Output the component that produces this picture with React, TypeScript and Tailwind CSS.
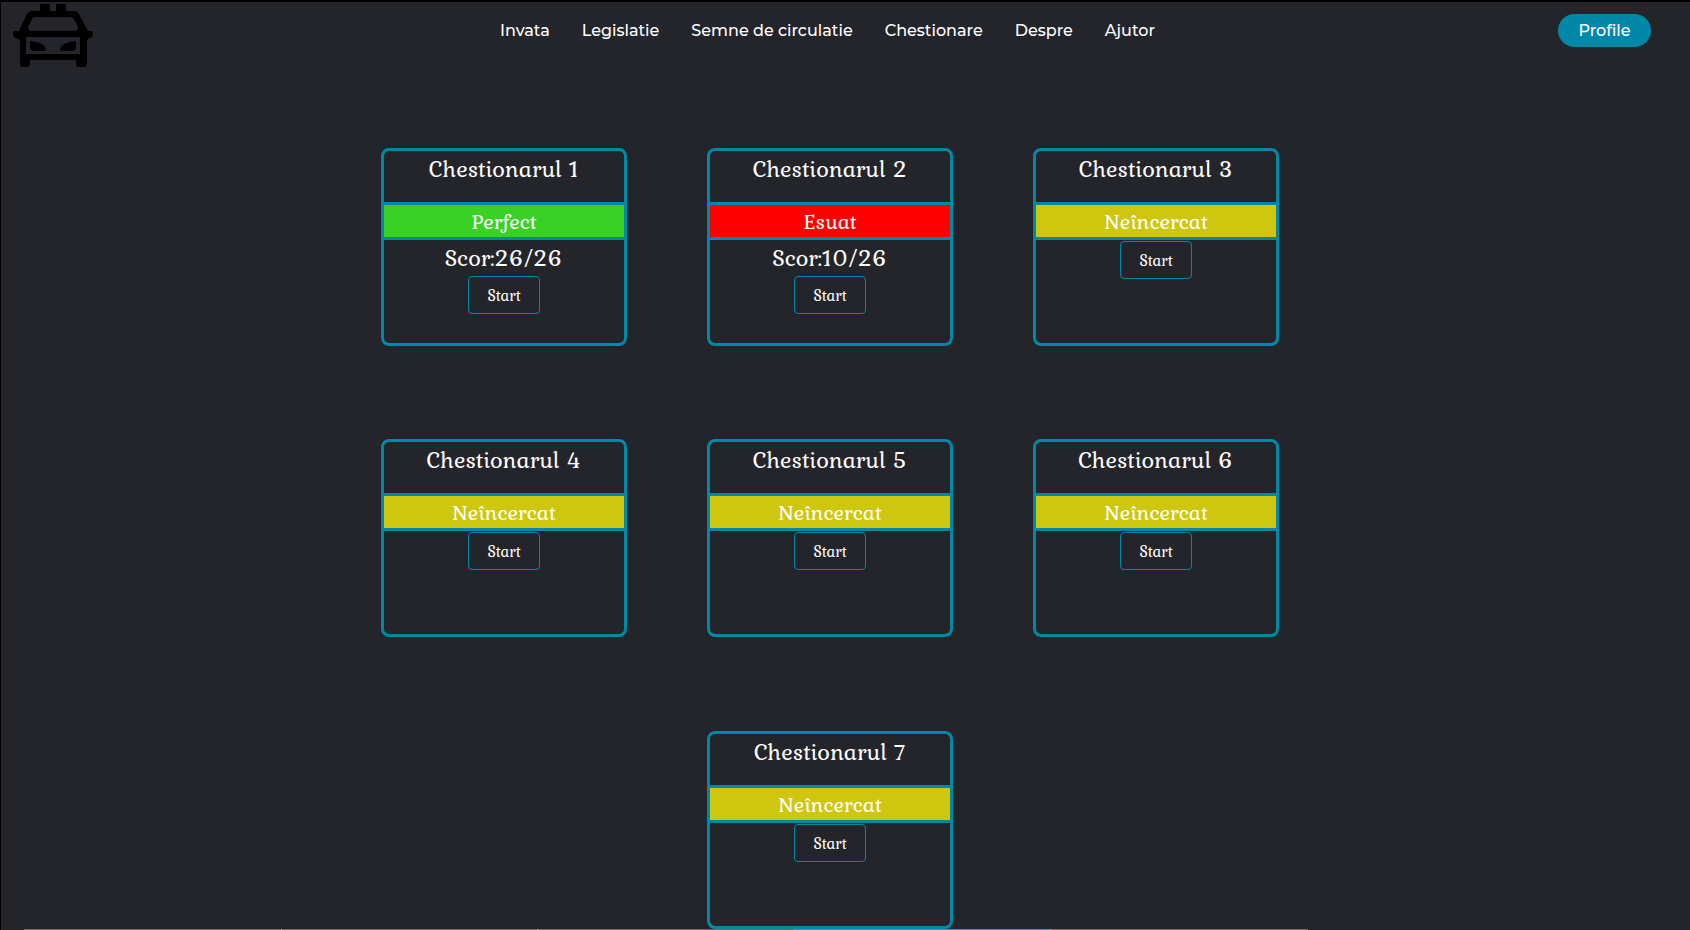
type Status = "Perfect" | "Esuat" | "Neîncercat";

type Quiz = { id: number; status: Status; score?: string };

const quizzes: Quiz[] = [
  { id: 1, status: "Perfect", score: "26/26" },
  { id: 2, status: "Esuat", score: "10/26" },
  { id: 3, status: "Neîncercat" },
  { id: 4, status: "Neîncercat" },
  { id: 5, status: "Neîncercat" },
  { id: 6, status: "Neîncercat" },
  { id: 7, status: "Neîncercat" },
];

const statusColor: Record<Status, string> = {
  Perfect: "bg-[#3ad126]",
  Esuat: "bg-[#ff0000]",
  Neîncercat: "bg-[#cfc60f]",
};

const links = ["Invata", "Legislatie", "Semne de circulatie", "Chestionare", "Despre", "Ajutor"];

function CarLogo() {
  return (
    <svg viewBox="0 0 80 64" className="h-16 w-20" role="img" aria-label="Masina">
      <path
        fillRule="evenodd"
        d="M27 0h10v7h6V0h10v7h7q5 0 7 5l8 15h3q2 0 2 3 0 4-5 5l-1 1v24q0 3-3 3h-5q-3 0-3-3v-4H17v4q0 3-3 3H10q-3 0-3-3V36l-2-1q-5-1-5-5 0-3 2-3h4l7-15q2-5 7-5h7zM22 13q-2 0-3 2l-4 8q0 4 4 4h42q4 0 4-4l-4-8q-1-2-3-2zM13 33v17h54V33z"
      />
      <path d="M17 37q14 1 16 8 0 2-2 2H20q-3-1-3-4zM63 37q-14 1-16 8 0 2 2 2h11q3-1 3-4z" />
    </svg>
  );
}

function QuizCard({ quiz }: { quiz: Quiz }) {
  return (
    <article className="flex h-[198px] w-[246px] flex-col items-center rounded-lg border-3 border-[#0088a9]">
      <h2 className="h-[51px] text-[24px] leading-9">Chestionarul {quiz.id}</h2>
      <p
        className={`w-full border-y-3 border-[#0088a9] text-center text-[22px] leading-8 ${statusColor[quiz.status]}`}
      >
        {quiz.status}
      </p>
      {quiz.score && <p className="-mb-px text-[24px] leading-9">Scor:{quiz.score}</p>}
      <button
        type="button"
        className="mt-px h-[38px] w-[72px] cursor-pointer rounded border border-[#0088a9] text-[16px]"
      >
        Start
      </button>
    </article>
  );
}

export default function App() {
  return (
    <div className="flex min-h-screen flex-col border-t-2 border-l border-black bg-[#24252a] font-['Kurale','Gabriela','Liberation_Serif',serif] text-white">
      <header className="flex items-start justify-between pt-0.5 pr-[39px] pl-3 font-['Montserrat','Inter',sans-serif] text-[16px] font-medium">
        <a href="#">
          <CarLogo />
        </a>
        <nav className="flex h-[53px] items-center pl-1">
          <ul className="flex gap-8">
            {links.map((label) => (
              <li key={label}>
                <a href="#">{label}</a>
              </li>
            ))}
          </ul>
        </nav>
        <div className="flex h-[53px] items-center">
          <button
            type="button"
            className="h-[33px] w-[93px] cursor-pointer rounded-full bg-[#0088a9]"
          >
            Profile
          </button>
        </div>
      </header>
      <main className="flex grow justify-center pt-20 pr-[31px]">
        <div className="flex max-w-[898px] flex-wrap justify-center gap-x-20 gap-y-[93px]">
          {quizzes.map((quiz) => (
            <QuizCard key={quiz.id} quiz={quiz} />
          ))}
        </div>
      </main>
      <footer className="flex h-px pl-[23px]">
        <div className="w-[257px] bg-[#6b6a6d]" />
        <div className="w-px bg-[#a5a5a7]" />
        <div className="w-[255px] bg-[#6b6a6d]" />
        <div className="w-0.5 bg-[#a5a5a7]" />
        <div className="w-[255px] bg-[#6b6a6d]" />
        <div className="w-[258px] bg-[#2a9fd0]" />
        <div className="w-64 bg-[#6b6a6d]" />
      </footer>
    </div>
  );
}
